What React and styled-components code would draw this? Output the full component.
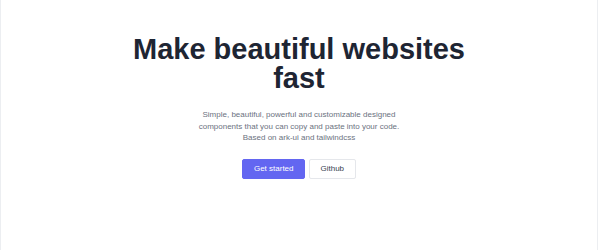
import React from "react";
import styled, { createGlobalStyle } from "styled-components";

const GlobalStyle = createGlobalStyle`
  html, body {
    margin: 0;
    padding: 0;
    background: #ffffff;
    font-family: "Liberation Sans", Arial, sans-serif;
  }
`;

const Page = styled.div`
  width: 598px;
  height: 250px;
  box-sizing: border-box;
  border-left: 1px solid #eceef1;
  border-right: 1px solid #eceef1;
  background: #ffffff;
`;

const Hero = styled.section`
  display: flex;
  flex-direction: column;
  align-items: center;
  padding-top: 35px;
  text-align: center;
`;

const Title = styled.h1`
  margin: 0;
  font-size: 29px;
  line-height: 29px;
  font-weight: 700;
  color: #1e2533;
  max-width: 360px;
`;

const Lead = styled.p`
  margin: 16px 0 0;
  font-size: 8px;
  line-height: 11.5px;
  color: #6b7280;
  max-width: 220px;
`;

const Actions = styled.div`
  display: flex;
  gap: 4px;
  margin-top: 15px;
`;

const Button = styled.button`
  height: 20px;
  padding: 0 10.5px;
  box-sizing: border-box;
  border-radius: 2px;
  font-family: inherit;
  font-size: 8px;
  cursor: pointer;
  border: 1px solid ${({ $primary }) => ($primary ? "#6366f1" : "#e5e7eb")};
  background: ${({ $primary }) => ($primary ? "#6366f1" : "#ffffff")};
  color: ${({ $primary }) => ($primary ? "#ffffff" : "#374151")};
`;

export default function App() {
  return (
    <>
      <GlobalStyle />
      <Page>
        <Hero>
          <Title>
            Make beautiful websites
            <br />
            fast
          </Title>
          <Lead>
            Simple, beautiful, powerful and customizable designed components
            that you can copy and paste into your code.
            <br />
            Based on ark-ui and tailwindcss
          </Lead>
          <Actions>
            <Button $primary>Get started</Button>
            <Button>Github</Button>
          </Actions>
        </Hero>
      </Page>
    </>
  );
}
